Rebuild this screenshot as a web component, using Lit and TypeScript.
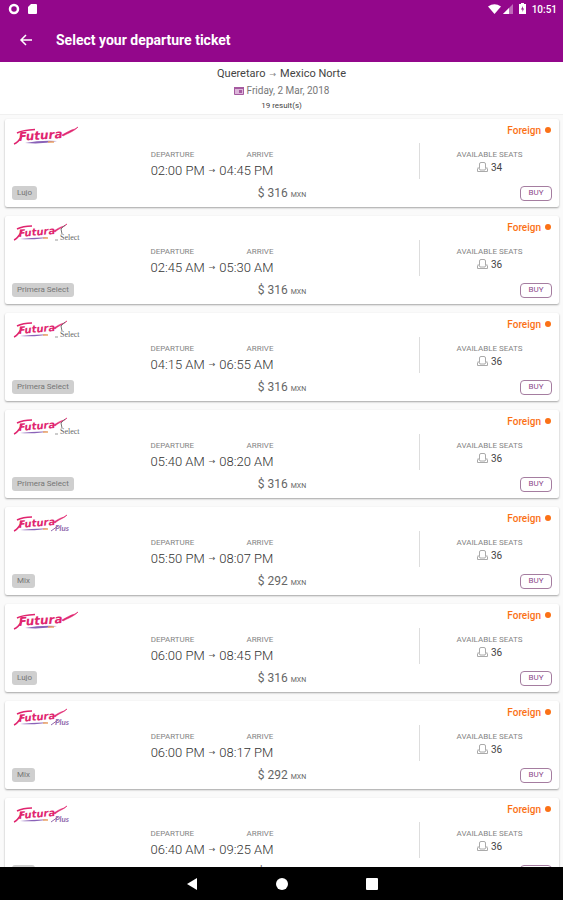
import { LitElement, html, css, svg, nothing } from "lit";
import { customElement, property } from "lit/decorators.js";

type Brand = "plain" | "select" | "plus";

interface Ticket {
  brand: Brand;
  service: string;
  departure: string;
  arrival: string;
  price: number;
  seats: number;
}

const TICKETS: Ticket[] = [
  { brand: "plain", service: "Lujo", departure: "02:00 PM", arrival: "04:45 PM", price: 316, seats: 34 },
  { brand: "select", service: "Primera Select", departure: "02:45 AM", arrival: "05:30 AM", price: 316, seats: 36 },
  { brand: "select", service: "Primera Select", departure: "04:15 AM", arrival: "06:55 AM", price: 316, seats: 36 },
  { brand: "select", service: "Primera Select", departure: "05:40 AM", arrival: "08:20 AM", price: 316, seats: 36 },
  { brand: "plus", service: "Mix", departure: "05:50 PM", arrival: "08:07 PM", price: 292, seats: 36 },
  { brand: "plain", service: "Lujo", departure: "06:00 PM", arrival: "08:45 PM", price: 316, seats: 36 },
  { brand: "plus", service: "Mix", departure: "06:00 PM", arrival: "08:17 PM", price: 292, seats: 36 },
  { brand: "plus", service: "Mix", departure: "06:40 AM", arrival: "09:25 AM", price: 292, seats: 36 },
];

@customElement("brand-logo")
export class BrandLogo extends LitElement {
  @property() brand: Brand = "plain";

  static styles = css`
    :host { display: block; }
    svg { display: block; overflow: visible; }
    .name { font: italic 700 12px "DejaVu Sans", sans-serif; fill: #e0256f; }
    .name.small { font-size: 10px; }
    .select { font: 8px "Liberation Serif", serif; fill: #666; }
    .plus { font: italic 700 8px Lato, sans-serif; fill: #9068ac; }
  `;

  render() {
    const plain = this.brand === "plain";
    return html`<svg width="68" height="22" viewBox="0 0 68 22" role="img" aria-label="Futura">
      ${plain
        ? svg`
          <path d="M1 19C4 18 6 16 9 11" fill="none" stroke="#e0256f" stroke-width="1.500"/>
          <path d="M4 8Q10 5 22 4.500" fill="none" stroke="#e0256f" stroke-width="1.500"/>
          <text class="name" x="6" y="16" transform="rotate(-4 6 16)">Futura</text>
          <path d="M50 11C55 8 60 7 65 2L62 4C57 5 53 8 49 10Z" fill="#e0256f" stroke="#e0256f" stroke-width=".6"/>
          <path d="M12 18Q28 15 44 16Q30 19.500 12 18Z" fill="#8a62b8"/>
          <path d="M35 17H41" stroke="#eda565" stroke-width="1.500"/>`
        : svg`
          <path d="M1 18C4 17 6 14 9 9" fill="none" stroke="#e0256f" stroke-width="1.500"/>
          <path d="M4 7Q10 4 19 4" fill="none" stroke="#e0256f" stroke-width="1.500"/>
          <text class="name small" x="6" y="15" transform="rotate(-5 6 15)">Futura</text>
          <path d="M42 10C46 6 50 6 54 2L51 4C47 5 44 7 41 9Z" fill="#e0256f" stroke="#e0256f" stroke-width=".6"/>
          <path d="M7 17Q22 15 35 15.500Q24 18 7 17Z" fill="#8a62b8"/>
          <path d="M30 16H35" stroke="#eda565" stroke-width="1.500"/>`}
      ${this.brand === "select"
        ? svg`<path d="M52 3L48 7L49 12" fill="none" stroke="#777"/><path d="M42 18L45 18" stroke="#999"/>
          <text class="select" x="47" y="18">Select</text>`
        : nothing}
      ${this.brand === "plus"
        ? svg`<text class="plus" x="42" y="18">Plus</text><path d="M38 18L45 13" stroke="#9068ac"/>`
        : nothing}
    </svg>`;
  }
}

@customElement("ticket-card")
export class TicketCard extends LitElement {
  @property({ attribute: false }) ticket!: Ticket;

  static styles = css`
    :host { display: block; }
    .card {
      display: grid;
      grid-template-columns: minmax(0, 1fr) 140px;
      grid-template-rows: 24px 36px 28px;
      background: #fff;
      border-radius: 2px;
      box-shadow: 0 1px 2px rgba(0, 0, 0, 0.35);
    }
    .logo { grid-area: 1 / 1 / 3 / 2; margin: 6px 0 0 8px; }
    .origin {
      grid-area: 1 / 2;
      display: flex;
      align-items: center;
      justify-content: flex-end;
      gap: 4px;
      padding: 0 8px 2px 0;
      font-size: 10px;
      font-weight: 500;
      color: #fb7116;
    }
    .dot { width: 6px; height: 6px; border-radius: 50%; background: #fb7116; }
    .trip { grid-area: 2 / 1; display: flex; flex-direction: column; align-items: center; padding-top: 6px; }
    .times { display: grid; grid-template-columns: auto auto auto; column-gap: 4px; align-items: center; }
    .label { font-size: 8px; line-height: 12px; color: #858585; }
    .end { grid-column: 3; text-align: right; }
    .time { font-size: 13px; line-height: 20px; font-weight: 300; color: #333; }
    .arrow { font: 8px/20px "DejaVu Sans", sans-serif; color: #555; }
    .seats {
      grid-area: 2 / 2;
      display: flex;
      flex-direction: column;
      align-items: center;
      padding-top: 6px;
      border-left: 1px solid #ddd;
    }
    .count { display: flex; align-items: center; gap: 3px; font-size: 10px; line-height: 13px; color: #444; }
    .foot {
      grid-area: 3 / 1 / 4 / 3;
      display: grid;
      grid-template-columns: 1fr auto 1fr;
      align-items: center;
      padding: 0 7px;
    }
    .tag {
      justify-self: start;
      padding: 0 5px;
      border-radius: 3px;
      background: #cfcfcf;
      font-size: 8px;
      line-height: 14px;
      color: #757575;
    }
    .price { font-size: 12px; color: #666; }
    .unit { font-size: 7px; }
    .buy {
      justify-self: end;
      width: 32px;
      height: 15px;
      padding: 0;
      border: 1px solid #a57da0;
      border-radius: 4px;
      background: #fff;
      font: 8px/12px Roboto, sans-serif;
      color: #8e4a8c;
    }
  `;

  render() {
    const t = this.ticket;
    return html`<article class="card">
      <brand-logo class="logo" .brand=${t.brand}></brand-logo>
      <div class="origin">Foreign <span class="dot"></span></div>
      <div class="trip">
        <div class="times">
          <span class="label">DEPARTURE</span>
          <span class="label end">ARRIVE</span>
          <span class="time">${t.departure}</span>
          <span class="arrow">→</span>
          <span class="time">${t.arrival}</span>
        </div>
      </div>
      <div class="seats">
        <span class="label">AVAILABLE SEATS</span>
        <span class="count">
          <svg width="11" height="11" viewBox="0 0 11 11" fill="none" stroke="#aaa" aria-hidden="true">
            <path d="M2.500 6V2Q2.500 .5 4 .5H7Q8.500 .5 8.500 2V6M.5 6.500V9.500H10.500V6.500M.5 6H2L3 8H8L9 6H10.500" />
          </svg>
          ${t.seats}
        </span>
      </div>
      <div class="foot">
        <span class="tag">${t.service}</span>
        <span class="price">$ ${t.price} <span class="unit">MXN</span></span>
        <button class="buy" type="button">BUY</button>
      </div>
    </article>`;
  }
}

@customElement("app-root")
export class AppRoot extends LitElement {
  static styles = css`
    :host {
      display: flex;
      flex-direction: column;
      height: 100vh;
      overflow: hidden;
      background: #fafafa;
      font-family: Roboto, sans-serif;
    }
    .top { flex: none; background: #93078b; color: #fff; box-shadow: 0 1px 2px rgba(0, 0, 0, 0.4); }
    .status { display: flex; align-items: center; justify-content: space-between; height: 18px; padding: 0 6px 0 8px; }
    .group { display: flex; align-items: center; gap: 6px; font-size: 10px; font-weight: 500; }
    .signals { display: flex; gap: 1px; }
    .toolbar { display: flex; align-items: center; gap: 23px; height: 44px; padding: 0 19px; }
    .back { display: block; width: 14px; height: 14px; padding: 0; border: 0; background: none; color: inherit; }
    .back svg { display: block; }
    h1 { margin: 0; font-size: 14px; line-height: 18px; font-weight: 700; }
    .summary {
      flex: none;
      display: flex;
      flex-direction: column;
      align-items: center;
      height: 53px;
      box-sizing: border-box;
      padding-top: 3px;
      background: #fff;
      border-bottom: 1px solid #f0f0f0;
    }
    .route { display: flex; align-items: center; gap: 4px; font-size: 11px; line-height: 18px; color: #444; }
    .arrow { font: 8px "DejaVu Sans", sans-serif; color: #888; }
    .date { display: flex; align-items: center; gap: 3px; font-size: 10px; line-height: 16px; color: #777; }
    .total { font-size: 8px; line-height: 14px; color: #444; }
    .list { flex: 1; min-height: 0; overflow: hidden; display: flex; flex-direction: column; gap: 9px; padding: 4px 4px 0 5px; }
    .list ticket-card { flex: none; }
    .nav { flex: none; display: flex; align-items: center; justify-content: center; gap: 76px; height: 33px; background: #000; }
    .key { width: 14px; height: 14px; padding: 0; border: 0; background: none; }
    .key svg { display: block; }
  `;

  render() {
    return html`
      <header class="top">
        <div class="status">
          <div class="group">
            <svg width="12" height="12" viewBox="0 0 12 12" aria-hidden="true">
              <circle cx="6" cy="6" r="4" fill="none" stroke="#fff" stroke-width="2.500" />
            </svg>
            <svg width="12" height="12" viewBox="0 0 12 12" aria-hidden="true">
              <path d="M5 1H10Q11 1 11 2V10Q11 11 10 11H3Q2 11 2 10V4Z" fill="#fff" />
            </svg>
          </div>
          <div class="group">
            <span class="signals">
              <svg width="13" height="12" viewBox="0 0 13 12" aria-hidden="true">
                <path d="M0 3.500Q6.500 -1 13 3.500L6.500 11Z" fill="#fff" />
              </svg>
              <svg width="11" height="12" viewBox="0 0 11 12" aria-hidden="true">
                <path d="M11 1V11H1Z" fill="#fff" fill-opacity=".4" />
                <path d="M7 5V11H1Z" fill="#fff" />
              </svg>
            </span>
            <svg width="7" height="12" viewBox="0 0 7 12" aria-hidden="true">
              <path d="M2 0H5V1H7V11H0V1H2Z" fill="#fff" />
              <path d="M4 3L2 6.500H3.500V9L5 5.500H3.800Z" fill="#93078b" />
            </svg>
            <span>10:51</span>
          </div>
        </div>
        <div class="toolbar">
          <button class="back" type="button" aria-label="Back">
            <svg width="14" height="14" viewBox="0 0 14 14" fill="none" stroke="currentColor" stroke-width="1.500">
              <path d="M13 7H2M7 2L2 7L7 12" />
            </svg>
          </button>
          <h1>Select your departure ticket</h1>
        </div>
      </header>
      <section class="summary">
        <div class="route"><span>Queretaro</span><span class="arrow">→</span><span>Mexico Norte</span></div>
        <div class="date">
          <svg width="10" height="10" viewBox="0 0 10 10" aria-hidden="true">
            <path d="M.5 1.500H9.500V8.500H.5Z" fill="#dcb5d9" stroke="#a55aa0" />
            <path d="M0 2H10" stroke="#a55aa0" stroke-width="2" />
            <path d="M5 4H8V7H5Z" fill="#a55aa0" />
          </svg>
          Friday, 2 Mar, 2018
        </div>
        <div class="total">19 result(s)</div>
      </section>
      <main class="list">${TICKETS.map((t) => html`<ticket-card .ticket=${t}></ticket-card>`)}</main>
      <nav class="nav">
        <button class="key" type="button" aria-label="Back">
          <svg width="14" height="14" viewBox="0 0 14 14"><path d="M12 1V13L2 7Z" fill="#fff" /></svg>
        </button>
        <button class="key" type="button" aria-label="Home">
          <svg width="14" height="14" viewBox="0 0 14 14"><circle cx="7" cy="7" r="6" fill="#fff" /></svg>
        </button>
        <button class="key" type="button" aria-label="Recent apps">
          <svg width="14" height="14" viewBox="0 0 14 14"><rect x="1" y="1" width="12" height="12" rx="1" fill="#fff" /></svg>
        </button>
      </nav>
    `;
  }
}
